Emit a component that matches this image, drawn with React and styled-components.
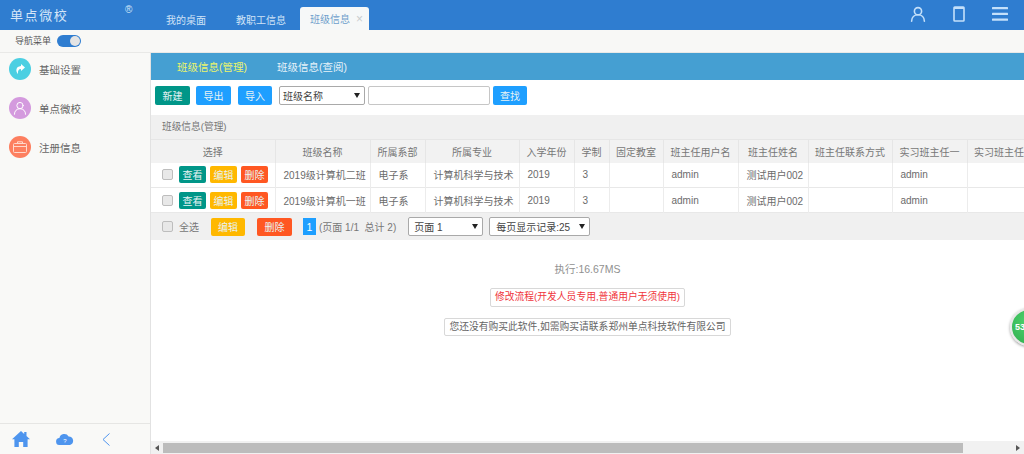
import React from 'react';
import styled, { createGlobalStyle } from 'styled-components';

const GlobalStyle = createGlobalStyle`
  html, body {
    margin: 0;
    height: 100%;
    overflow: hidden;
    background: #fff;
  }
  body {
    font-family: "Liberation Sans", "Noto Sans CJK SC", sans-serif;
    font-size: 10px;
    color: #666;
  }
  * { box-sizing: border-box; }
`;

const Page = styled.div`
  position: relative;
  display: flex;
  flex-direction: column;
  width: 1024px;
  height: 454px;
  overflow: hidden;
`;

const TopBar = styled.header`
  display: flex;
  height: 30px;
  background: #2f7dd0;
  flex: none;
`;

const Logo = styled.div`
  position: relative;
  width: 163px;
  padding: 8px 0 0 10px;
  font-size: 13px;
  line-height: 15px;
  letter-spacing: 1.6px;
  color: #d5e6f8;
  flex: none;
`;

const Registered = styled.span`
  position: absolute;
  left: 125px;
  top: 5px;
  font-size: 10px;
  line-height: 10px;
  letter-spacing: 0;
`;

const Tabs = styled.nav`
  display: flex;
  align-items: flex-end;
  flex: 1;
`;

const Tab = styled.div`
  display: flex;
  align-items: center;
  justify-content: ${(p) => (p.$active ? 'flex-start' : 'center')};
  height: ${(p) => (p.$active ? '23px' : '22px')};
  width: ${(p) => p.$width}px;
  padding-left: ${(p) => (p.$active ? '10px' : '0')};
  margin-left: ${(p) => p.$gap || 0}px;
  font-size: 10px;
  color: ${(p) => (p.$active ? '#6f9fcc' : '#cfe3f7')};
  background: ${(p) => (p.$active ? '#f6f8f8' : 'transparent')};
  border-radius: 3px 3px 0 0;
`;

const TabClose = styled.span`
  margin-left: 6px;
  font-size: 12px;
  line-height: 12px;
  color: #c9ccce;
`;

const TopIcons = styled.div`
  display: flex;
  align-items: center;
  gap: 27px;
  padding: 0 16px 2px 0;
  color: #c4e0fa;
`;

const SubBar = styled.div`
  display: flex;
  align-items: center;
  gap: 6px;
  height: 23px;
  padding: 0 0 1px 15px;
  background: #f8f8f6;
  border-bottom: 1px solid #e9e9e7;
  font-size: 9px;
  color: #555;
  flex: none;
`;

const Toggle = styled.div`
  position: relative;
  width: 24px;
  height: 12px;
  border-radius: 6px;
  background: #2f7dd0;
`;

const ToggleKnob = styled.span`
  position: absolute;
  right: 1px;
  top: 1px;
  width: 10px;
  height: 10px;
  border-radius: 50%;
  background: #e4e4e4;
`;

const Body = styled.div`
  display: flex;
  flex: 1;
  min-height: 0;
`;

const Sidebar = styled.aside`
  display: flex;
  flex-direction: column;
  width: 151px;
  background: #f9f9f7;
  border-right: 1px solid #e2e2e2;
  flex: none;
`;

const SideMenu = styled.ul`
  flex: 1;
  list-style: none;
  margin: 0;
  padding: 5px 0 0 9px;
`;

const SideItem = styled.li`
  display: flex;
  align-items: center;
  gap: 8px;
  height: 22px;
  margin-bottom: 17px;
  font-size: 10.5px;
  color: #666;
`;

const SideCircle = styled.span`
  display: flex;
  align-items: center;
  justify-content: center;
  width: 22px;
  height: 22px;
  border-radius: 50%;
  background: ${(p) => p.$color};
  color: #fff;
  flex: none;
`;

const SideFooter = styled.div`
  display: flex;
  align-items: center;
  height: 31px;
  padding-left: 12px;
  border-top: 1px solid #e6e6e4;
  color: #4e95ee;
  flex: none;
`;

const FooterIcon = styled.span`
  display: flex;
  width: ${(p) => p.$width}px;
`;

const Main = styled.main`
  display: flex;
  flex-direction: column;
  flex: 1;
  min-width: 0;
`;

const SubTabs = styled.div`
  display: flex;
  align-items: center;
  gap: 30px;
  height: 27px;
  padding-left: 26px;
  background: #459fd2;
  font-size: 10.5px;
  flex: none;
`;

const SubTab = styled.span`
  color: ${(p) => (p.$active ? '#ecf56a' : '#e6f2f9')};
`;

const Toolbar = styled.div`
  display: flex;
  align-items: center;
  height: 30px;
  padding: 1px 0 0 4px;
  flex: none;
`;

const Button = styled.button`
  height: ${(p) => p.$height || 19}px;
  width: ${(p) => p.$width || 35}px;
  margin-right: ${(p) => p.$gap || 0}px;
  margin-left: ${(p) => p.$left || 0}px;
  padding: 0;
  border: 0;
  border-radius: 2px;
  background: ${(p) => p.$color};
  color: #e8f3f5;
  font: inherit;
  font-size: 10px;
`;

const Select = styled.div`
  position: relative;
  display: flex;
  align-items: center;
  height: 19px;
  width: ${(p) => p.$width}px;
  margin-left: ${(p) => p.$left || 0}px;
  padding-left: ${(p) => p.$pad || 3}px;
  background: #fff;
  border: 1px solid #a9a9a9;
  border-radius: 2px;
  font-size: 10px;
  color: #444;
  &::after {
    content: '';
    position: absolute;
    right: 4px;
    top: 6px;
    border: 3px solid transparent;
    border-top: 5px solid #222;
    border-bottom: 0;
  }
`;

const SearchInput = styled.input`
  width: 122px;
  height: 19px;
  margin: 0 3px;
  padding: 0 4px;
  background: #fff;
  border: 1px solid #c6c6c6;
  border-radius: 2px;
  outline: none;
`;

const PanelBar = styled.div`
  height: 24px;
  margin-top: 5px;
  padding: 5px 0 0 11px;
  background: #f0f0f0;
  font-size: 9.7px;
  line-height: 14px;
  color: #777;
  flex: none;
`;

const Table = styled.table`
  width: 890px;
  table-layout: fixed;
  border-collapse: collapse;
  flex: none;
`;

const HeadCell = styled.th`
  height: 23px;
  width: ${(p) => p.$width}px;
  padding: 0;
  background: #f2f2f2;
  border-right: 1px solid #e6e6e6;
  border-top: 1px solid #e6e6e6;
  font-size: 10px;
  font-weight: 400;
  color: #777;
  text-align: center;
  white-space: nowrap;
  overflow: hidden;
`;

const Row = styled.tr`
  border-bottom: 1px solid #e8e8e8;
`;

const Cell = styled.td`
  height: 25px;
  padding: 0 0 0 ${(p) => p.$pad ?? 8}px;
  border-right: 1px solid #ececec;
  font-size: 10px;
  color: #6b6b6b;
  white-space: nowrap;
  overflow: hidden;
`;

const ActionCell = styled.div`
  display: flex;
  align-items: center;
  gap: 4px;
  padding-left: 11px;
`;

const Check = styled.span`
  display: inline-block;
  width: 11px;
  height: 11px;
  margin-right: ${(p) => p.$gap || 0}px;
  background: #e8e8e8;
  border: 1px solid #bdbdbd;
  border-radius: 2px;
  flex: none;
`;

const TableFooter = styled.div`
  display: flex;
  align-items: center;
  height: 27px;
  padding-left: 11px;
  background: #f0f0f0;
  font-size: 10px;
  color: #777;
  flex: none;
`;

const PageNumber = styled.span`
  display: flex;
  align-items: center;
  justify-content: center;
  width: 13px;
  height: 17px;
  margin: 0 3px 0 11px;
  background: #1e9fff;
  color: #fff;
  font-size: 10.5px;
`;

const Content = styled.div`
  display: flex;
  flex-direction: column;
  align-items: center;
  flex: 1;
  padding-top: 23px;
  min-height: 0;
`;

const Timing = styled.div`
  margin-bottom: 12px;
  font-size: 10.5px;
  line-height: 13px;
  color: #909090;
`;

const Notice = styled.div`
  height: ${(p) => (p.$red ? 19 : 18)}px;
  margin-bottom: 11px;
  padding: 0 4px;
  line-height: 16px;
  background: #fff;
  border: 1px solid #d8d8d8;
  border-radius: 2px;
  font-size: 9.77px;
  color: ${(p) => (p.$red ? '#f0363c' : '#666')};
  white-space: nowrap;
`;

const Scrollbar = styled.div`
  display: flex;
  align-items: center;
  justify-content: space-between;
  height: 13px;
  background: #f1f1f1;
  flex: none;
`;

const ScrollArrow = styled.span`
  width: 0;
  height: 0;
  margin: 0 4px;
  border-top: 3px solid transparent;
  border-bottom: 3px solid transparent;
  border-left: ${(p) => (p.$right ? '4px solid #555' : '0')};
  border-right: ${(p) => (p.$right ? '0' : '4px solid #555')};
`;

const ScrollTrack = styled.div`
  flex: 1;
  height: 100%;
  padding: 2px 49px 1px 0;
`;

const ScrollThumb = styled.div`
  height: 100%;
  background: #bcbcbc;
`;

const FloatBall = styled.div`
  position: absolute;
  left: 1010px;
  top: 308px;
  display: flex;
  align-items: center;
  width: 38px;
  height: 38px;
  padding-left: 3px;
  border-radius: 50%;
  background: radial-gradient(circle at 50% 35%, #4fd36f, #2fae4e);
  border: 2px solid #e8e8e8;
  box-shadow: 0 1px 3px rgba(0, 0, 0, 0.4);
  color: #fff;
  font-size: 9px;
  font-weight: 700;
`;

const UserGlyph = ({ size, stroke = 2 }) => (
  <svg width={size} height={size} viewBox="0 0 20 20" fill="none" stroke="currentColor" strokeWidth={stroke} strokeLinecap="round">
    <circle cx="10" cy="6.5" r="4.5" />
    <path d="M2 19c0-5 3.5-8 8-8s8 3 8 8" />
  </svg>
);

const columns = [
  ['选择', 124], ['班级名称', 95], ['所属系部', 55], ['所属专业', 94], ['入学年份', 55],
  ['学制', 35], ['固定教室', 54], ['班主任用户名', 75], ['班主任姓名', 70],
  ['班主任联系方式', 84], ['实习班主任一', 75], ['实习班主任二', 74],
];

const rows = ['2019级计算机二班', '2019级计算机一班'];

const App = () => (
  <Page>
    <GlobalStyle />
    <TopBar>
      <Logo>
        单点微校
        <Registered>®</Registered>
      </Logo>
      <Tabs>
        <Tab $width={46}>我的桌面</Tab>
        <Tab $width={70} $gap={17}>教职工信息</Tab>
        <Tab $width={69} $gap={4} $active>
          班级信息
          <TabClose>×</TabClose>
        </Tab>
      </Tabs>
      <TopIcons>
        <UserGlyph size={16} />
        <svg width="12" height="16" viewBox="0 0 12 16" fill="none" stroke="currentColor" strokeWidth="1.6">
          <rect x="1" y="1" width="10" height="14" rx="0.8" />
          <path d="M1 2h10" strokeWidth="2" />
        </svg>
        <svg width="16" height="14" viewBox="0 0 16 14" fill="currentColor">
          <rect y="0" width="16" height="2.2" rx="0.5" />
          <rect y="5.8" width="16" height="2.2" rx="0.5" />
          <rect y="11.6" width="16" height="2.2" rx="0.5" />
        </svg>
      </TopIcons>
    </TopBar>
    <SubBar>
      导航菜单
      <Toggle>
        <ToggleKnob />
      </Toggle>
    </SubBar>
    <Body>
      <Sidebar>
        <SideMenu>
          <SideItem>
            <SideCircle $color="#4ccfe2">
              <svg width="12" height="12" viewBox="0 0 12 12" fill="#fff">
                <path d="M7 1l4 3.5L7 8V6C4.5 6 3.5 8 4 11 1.5 8.5 1.5 3.5 7 3z" />
              </svg>
            </SideCircle>
            基础设置
          </SideItem>
          <SideItem>
            <SideCircle $color="#d49ade">
              <UserGlyph size={14} stroke={1.4} />
            </SideCircle>
            单点微校
          </SideItem>
          <SideItem>
            <SideCircle $color="#fd7f5f">
              <svg width="14" height="12" viewBox="0 0 14 12" fill="none" stroke="#ffd9cc" strokeWidth="1">
                <rect x="0.5" y="2.5" width="13" height="9" rx="1" />
                <path d="M4.5 2.5V.8h5v1.7M.5 5.5h13" />
              </svg>
            </SideCircle>
            注册信息
          </SideItem>
        </SideMenu>
        <SideFooter>
          <FooterIcon $width={44}>
            <svg width="18" height="16" viewBox="0 0 18 16" fill="currentColor">
              <path d="M9 0l3.2 2.9V1H14.5v4L18 8.2h-2.4V16h-4.4v-5H6.8v5H2.4V8.2H0z" />
            </svg>
          </FooterIcon>
          <FooterIcon $width={46}>
            <svg width="18" height="12" viewBox="0 0 18 12">
              <path fill="currentColor" d="M3.8 12a3.5 3.5 0 0 1-.4-7A5 5 0 0 1 12.6 3.4 4.4 4.4 0 0 1 14 12z" />
              <text x="9" y="10" fontSize="6" textAnchor="middle" fill="#fff">?</text>
            </svg>
          </FooterIcon>
          <FooterIcon $width={8}>
            <svg width="8" height="13" viewBox="0 0 8 13" fill="none" stroke="currentColor" strokeWidth="1">
              <path d="M7.5 .5L1 6.5l6.5 6" />
            </svg>
          </FooterIcon>
        </SideFooter>
      </Sidebar>
      <Main>
        <SubTabs>
          <SubTab $active>班级信息(管理)</SubTab>
          <SubTab>班级信息(查阅)</SubTab>
        </SubTabs>
        <Toolbar>
          <Button $color="#009688" $gap={6}>新建</Button>
          <Button $color="#1e9fff" $gap={7}>导出</Button>
          <Button $color="#1e9fff" $width={34} $gap={7}>导入</Button>
          <Select $width={86}>班级名称</Select>
          <SearchInput />
          <Button $color="#1e9fff" $width={34}>查找</Button>
        </Toolbar>
        <PanelBar>班级信息(管理)</PanelBar>
        <Table>
          <thead>
            <tr>
              {columns.map(([title, width]) => (
                <HeadCell key={title} $width={width}>{title}</HeadCell>
              ))}
            </tr>
          </thead>
          <tbody>
            {rows.map((name) => (
              <Row key={name}>
                <Cell $pad={0}>
                  <ActionCell>
                    <Check $gap={2} />
                    <Button $color="#009688" $width={27} $height={17}>查看</Button>
                    <Button $color="#ffb800" $width={27} $height={17}>编辑</Button>
                    <Button $color="#ff5722" $width={27} $height={17}>删除</Button>
                  </ActionCell>
                </Cell>
                <Cell>{name}</Cell>
                <Cell>电子系</Cell>
                <Cell>计算机科学与技术</Cell>
                <Cell>2019</Cell>
                <Cell>3</Cell>
                <Cell />
                <Cell>admin</Cell>
                <Cell>测试用户002</Cell>
                <Cell />
                <Cell>admin</Cell>
                <Cell />
              </Row>
            ))}
          </tbody>
        </Table>
        <TableFooter>
          <Check $gap={6} />
          全选
          <Button $color="#ffb800" $width={34} $height={18} $left={12}>编辑</Button>
          <Button $color="#ff5722" $width={35} $height={18} $left={12}>删除</Button>
          <PageNumber>1</PageNumber>
          (页面 1/1&nbsp; 总计 2)
          <Select $width={75} $left={12} $pad={5}>页面 1</Select>
          <Select $width={101} $left={6} $pad={6}>每页显示记录:25</Select>
        </TableFooter>
        <Content>
          <Timing>执行:16.67MS</Timing>
          <Notice $red>修改流程(开发人员专用,普通用户无须使用)</Notice>
          <Notice>您还没有购买此软件,如需购买请联系郑州单点科技软件有限公司</Notice>
        </Content>
        <Scrollbar>
          <ScrollArrow />
          <ScrollTrack>
            <ScrollThumb />
          </ScrollTrack>
          <ScrollArrow $right />
        </Scrollbar>
      </Main>
    </Body>
    <FloatBall>53</FloatBall>
  </Page>
);

export default App;
